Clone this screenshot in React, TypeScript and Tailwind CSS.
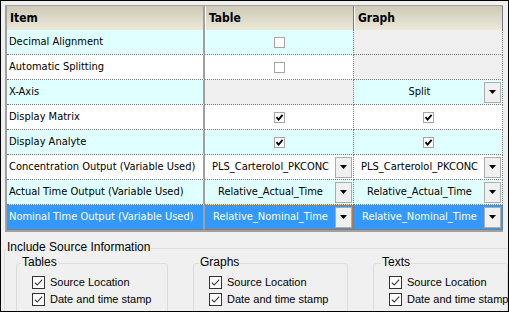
import React from 'react';

type CellT =
  | { k: 'check'; on: boolean }
  | { k: 'off' }
  | { k: 'drop'; text: string; focus?: boolean };

type Row = { label: string; tone: 'cyan' | 'white' | 'sel'; table: CellT; graph: CellT };

const rows: Row[] = [
  { label: 'Decimal Alignment', tone: 'cyan', table: { k: 'check', on: false }, graph: { k: 'off' } },
  { label: 'Automatic Splitting', tone: 'white', table: { k: 'check', on: false }, graph: { k: 'off' } },
  { label: 'X-Axis', tone: 'cyan', table: { k: 'off' }, graph: { k: 'drop', text: 'Split' } },
  { label: 'Display Matrix', tone: 'white', table: { k: 'check', on: true }, graph: { k: 'check', on: true } },
  { label: 'Display Analyte', tone: 'cyan', table: { k: 'check', on: true }, graph: { k: 'check', on: true } },
  {
    label: 'Concentration Output (Variable Used)',
    tone: 'white',
    table: { k: 'drop', text: 'PLS_Carterolol_PKCONC' },
    graph: { k: 'drop', text: 'PLS_Carterolol_PKCONC' },
  },
  {
    label: 'Actual Time Output (Variable Used)',
    tone: 'cyan',
    table: { k: 'drop', text: 'Relative_Actual_Time' },
    graph: { k: 'drop', text: 'Relative_Actual_Time' },
  },
  {
    label: 'Nominal Time Output (Variable Used)',
    tone: 'sel',
    table: { k: 'drop', text: 'Relative_Nominal_Time', focus: true },
    graph: { k: 'drop', text: 'Relative_Nominal_Time' },
  },
];

function toneBg(tone: Row['tone']) {
  if (tone === 'sel') return 'bg-[#3399ff] text-white';
  if (tone === 'cyan') return 'bg-[#e0ffff] text-black';
  return 'bg-white text-black';
}

function GridCheck({ on }: { on: boolean }) {
  return (
    <div className="w-[11px] h-[11px] border border-[#a5a5a5] bg-white flex items-center justify-center">
      {on && (
        <svg width="9" height="9" viewBox="0 0 9 9">
          <path d="M1.5 4.2 L3.6 6.6 L7.6 1.8" stroke="#000" strokeWidth="1.8" fill="none" />
        </svg>
      )}
    </div>
  );
}

function Cell({ c, tone }: { c: CellT; tone: Row['tone'] }) {
  const bg = c.k === 'off' ? 'bg-[#f0f0f0] text-black' : toneBg(tone);
  return (
    <div
      className={`relative w-[149px] h-full border-r border-b border-dotted border-[#7a7a7a] flex items-center justify-center ${bg}`}
    >
      {c.k === 'check' && <GridCheck on={c.on} />}
      {c.k === 'drop' && (
        <>
          <div className="flex items-center w-full h-full pl-[1px]">
            <span className="flex-1 text-center whitespace-nowrap overflow-hidden">{c.text}</span>
            <div className="w-[17px] h-[21px] mr-[1px] border border-[#acacac] bg-[#f0f0f0] flex items-center justify-center">
              <svg width="7" height="4" viewBox="0 0 7 4">
                <path d="M0 0H7L3.5 4Z" fill="#000" />
              </svg>
            </div>
          </div>
          {c.focus && <div className="absolute inset-0 border border-[#c2762f]" />}
        </>
      )}
    </div>
  );
}

function SmallCheck() {
  return (
    <div className="w-[13px] h-[13px] border border-[#333333] bg-white flex items-center justify-center">
      <svg width="11" height="11" viewBox="0 0 11 11">
        <path d="M1.8 5.6 L4.2 8 L9.2 2.6" stroke="#333333" strokeWidth="1.1" fill="none" />
      </svg>
    </div>
  );
}

function SubGroup({
  title,
  titleLeft,
  className,
}: {
  title: string;
  titleLeft: string;
  className: string;
}) {
  return (
    <div className={`relative shrink-0 h-[80px] border border-[#dcdcdc] rounded-[3px] pt-[10px] pl-[15px] ${className}`}>
      <span className={`absolute -top-[9px] ${titleLeft} px-[1px] bg-[#f0f0f0] text-[12px] leading-[14px] text-black`}>
        {title}
      </span>
      <div className="flex items-center h-[17px] text-[11px] leading-[17px] text-black whitespace-nowrap">
        <SmallCheck />
        <span className="ml-[5px]">Source Location</span>
      </div>
      <div className="flex items-center h-[17px] text-[11px] leading-[17px] text-black whitespace-nowrap">
        <SmallCheck />
        <span className="ml-[5px]">Date and time stamp</span>
      </div>
    </div>
  );
}

export default function App() {
  return (
    <div className="w-[509px] h-[312px] border border-black bg-[#f0f0f0] overflow-hidden font-['Liberation_Sans',Arial,sans-serif]">
      <div className="ml-[4px] mt-[4px] w-[498px] border-l-2 border-b-2 border-[#a0a0a0] text-[11px] font-['DejaVu_Sans_Condensed','Liberation_Sans',sans-serif]">
        <div className="flex h-[25px] border-t border-[#a0a0a0] bg-linear-to-b from-[#cdc9b6] to-[#ece9da] font-bold text-[12px] text-black">
          <div className="w-[198px] h-full border-r-2 border-[#a0a0a0] pl-[3px] flex items-center">Item</div>
          <div className="w-[149px] h-full border-l border-l-white border-r border-r-[#7a7a7a] pl-[3px] flex items-center">
            Table
          </div>
          <div className="w-[149px] h-full border-l border-l-white border-r border-r-[#7a7a7a] pl-[3px] flex items-center">
            Graph
          </div>
        </div>
        {rows.map((r) => (
          <div key={r.label} className="flex h-[25px]">
            <div
              className={`w-[198px] h-full border-r-2 border-r-[#a0a0a0] border-b border-b-[#7a7a7a] border-dotted pl-[2px] flex items-center whitespace-nowrap ${toneBg(r.tone)}`}
              style={{ borderRightStyle: 'solid' }}
            >
              {r.label}
            </div>
            <Cell c={r.table} tone={r.tone} />
            <Cell c={r.graph} tone={r.tone} />
          </div>
        ))}
      </div>

      <div className="relative ml-[3px] mt-[16px] w-[600px] h-[100px] border border-[#dcdcdc] rounded-[3px]">
        <span className="absolute -top-[9px] left-[1px] px-[1px] bg-[#f0f0f0] text-[12px] leading-[14px] text-black">
          Include Source Information
        </span>
        <div className="flex pt-[14px] pl-[11px]">
          <SubGroup title="Tables" titleLeft="left-[4px]" className="w-[152px]" />
          <SubGroup title="Graphs" titleLeft="left-[5px]" className="w-[155px] ml-[25px]" />
          <SubGroup title="Texts" titleLeft="left-[7px]" className="w-[135px] ml-[25px]" />
        </div>
      </div>
    </div>
  );
}
